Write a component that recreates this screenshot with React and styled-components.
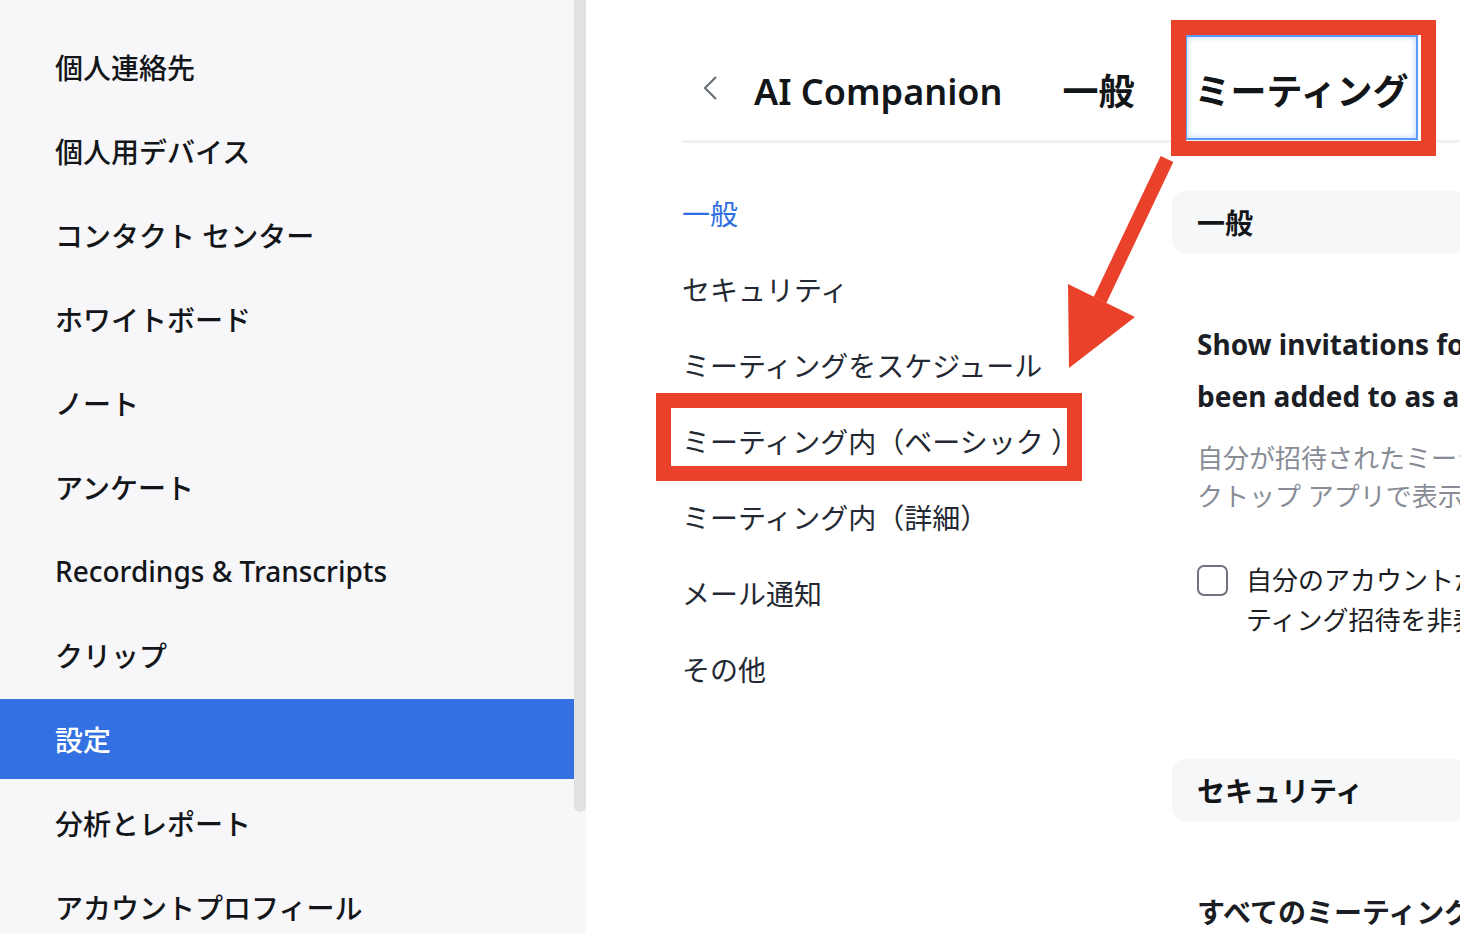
import React from "react";
import styled, { createGlobalStyle, css } from "styled-components";

const GlobalStyle = createGlobalStyle`
  html, body {
    margin: 0;
    padding: 0;
    background: #ffffff;
    overflow: hidden;
  }
  body {
    font-family: "Noto Sans", "Noto Sans CJK JP", sans-serif;
    color: #131619;
  }
`;

const sideItems = [
  "個人連絡先",
  "個人用デバイス",
  "コンタクト センター",
  "ホワイトボード",
  "ノート",
  "アンケート",
  "Recordings & Transcripts",
  "クリップ",
  "設定",
  "分析とレポート",
  "アカウントプロフィール",
];

const subItems = [
  "一般",
  "セキュリティ",
  "ミーティングをスケジュール",
  "ミーティング内（ベーシック ）",
  "ミーティング内（詳細）",
  "メール通知",
  "その他",
];

const RED = "#e9412a";

// Layout
const Page = styled.div`
  position: relative;
  display: flex;
  width: 1460px;
  height: 934px;
  overflow: hidden;
`;

const Sidebar = styled.aside`
  display: flex;
  flex-shrink: 0;
  width: 586px;
  height: 100%;
  background: #f7f7f9;
`;

const NavList = styled.nav`
  display: flex;
  flex-direction: column;
  gap: 4px;
  width: 574px;
  padding-top: 27px;
`;

const NavItem = styled.div`
  flex-shrink: 0;
  height: 80px;
  display: flex;
  align-items: center;
  padding-left: 55px;
  font-size: 28px;
  font-weight: 500;
  white-space: nowrap;
  color: #131619;
  ${({ $active }) =>
    $active &&
    css`
      background: #3371e3;
      color: #ffffff;
    `}
`;

const ScrollTrack = styled.div`
  width: 12px;
  height: 100%;
`;

const ScrollThumb = styled.div`
  height: 812px;
  background: #e1e1e3;
  border-radius: 0 0 6px 6px;
`;

const Main = styled.main`
  flex: 1;
  min-width: 0;
  overflow: hidden;
  padding-left: 96px;
`;

const TabBar = styled.div`
  display: flex;
  align-items: center;
  gap: 40px;
  padding-top: 35px;
  border-bottom: 3px solid #f0f1f4;
  width: 1200px;
`;

const BackButton = styled.div`
  display: flex;
  align-items: center;
  margin-left: 20px;
  margin-right: -16px;
  width: 18px;
  height: 105px;
  color: #6b7079;
`;

const Tab = styled.div`
  box-sizing: border-box;
  height: 105px;
  padding: 9px 10px 0;
  display: flex;
  align-items: center;
  font-size: 36px;
  font-weight: 600;
  line-height: 50px;
  white-space: nowrap;
  color: #131619;
  ${({ $focused }) =>
    $focused &&
    css`
      box-shadow: inset 0 0 0 2px #5b9bf4, inset 0 0 6px 2px #b9d4fb;
    `}
`;

const Body = styled.div`
  display: flex;
`;

const SubNav = styled.div`
  flex-shrink: 0;
  width: 490px;
  padding-top: 33px;
`;

const SubItem = styled.div`
  height: 76px;
  line-height: 76px;
  font-size: 28px;
  white-space: nowrap;
  color: ${({ $active }) => ($active ? "#2f6ee0" : "#232833")};
`;

const Content = styled.div`
  flex-shrink: 0;
  width: 900px;
  padding-top: 48px;
`;

const SectionHeader = styled.div`
  height: 62px;
  display: flex;
  align-items: center;
  padding-left: 25px;
  background: #f6f7f9;
  border-radius: 14px;
  font-size: 28px;
  font-weight: 700;
  color: #131619;
  margin-top: ${({ $gap }) => $gap || 0}px;
`;

const Setting = styled.div`
  padding: 65px 0 0 25px;
`;

const SettingTitle = styled.div`
  font-size: 28px;
  font-weight: 700;
  line-height: 52px;
  white-space: nowrap;
  color: #1b1e25;
`;

const SettingDesc = styled.div`
  margin-top: 17px;
  font-size: 26px;
  line-height: 38px;
  white-space: nowrap;
  color: #878c96;
`;

const CheckRow = styled.label`
  display: flex;
  align-items: flex-start;
  gap: 18px;
  margin-top: 45px;
`;

const CheckBox = styled.span`
  box-sizing: border-box;
  flex-shrink: 0;
  width: 31px;
  height: 31px;
  margin-top: 5px;
  border: 2px solid #6e7480;
  border-radius: 7px;
  background: #ffffff;
`;

const CheckText = styled.div`
  font-size: 26px;
  line-height: 40px;
  white-space: nowrap;
  color: #1b1e25;
`;

// Annotations drawn over the screenshot
const Highlight = styled.div`
  position: absolute;
  box-sizing: border-box;
  border: 15px solid ${RED};
  pointer-events: none;
`;

const ArrowLayer = styled.svg`
  position: absolute;
  left: 0;
  top: 0;
  pointer-events: none;
`;

const App = () => {
  return (
    <>
      <GlobalStyle />
      <Page>
        <Sidebar>
          <NavList>
            {sideItems.map((label) => (
              <NavItem key={label} $active={label === "設定"}>
                {label}
              </NavItem>
            ))}
          </NavList>
          <ScrollTrack>
            <ScrollThumb />
          </ScrollTrack>
        </Sidebar>

        <Main>
          <TabBar>
            <BackButton>
              <svg width="16" height="26" viewBox="0 0 16 26" fill="none">
                <path d="M14 2 L3 13 L14 24" stroke="currentColor" strokeWidth="2.2" />
              </svg>
            </BackButton>
            <Tab>AI Companion</Tab>
            <Tab>一般</Tab>
            <Tab $focused>ミーティング</Tab>
          </TabBar>

          <Body>
            <SubNav>
              {subItems.map((label, i) => (
                <SubItem key={label} $active={i === 0}>
                  {label}
                </SubItem>
              ))}
            </SubNav>

            <Content>
              <SectionHeader>一般</SectionHeader>
              <Setting>
                <SettingTitle>
                  Show invitations for meetings that you have
                  <br />
                  been added to as an alternative host
                </SettingTitle>
                <SettingDesc>
                  自分が招待されたミーティングの招待状をデス
                  <br />
                  クトップ アプリで表示します
                </SettingDesc>
                <CheckRow>
                  <CheckBox />
                  <CheckText>
                    自分のアカウントが代理ホストとして追加されたミー
                    <br />
                    ティング招待を非表示にする
                  </CheckText>
                </CheckRow>
              </Setting>

              <SectionHeader $gap={119}>セキュリティ</SectionHeader>
              <Setting>
                <SettingTitle>すべてのミーティングをパスコードで保護</SettingTitle>
              </Setting>
            </Content>
          </Body>
        </Main>

        <Highlight style={{ left: 1171, top: 20, width: 265, height: 136 }} />
        <Highlight style={{ left: 656, top: 393, width: 426, height: 88 }} />
        <ArrowLayer width="1460" height="934" viewBox="0 0 1460 934">
          <line x1="1167" y1="159" x2="1100" y2="300" stroke={RED} strokeWidth="14" />
          <polygon points="1068,284 1135,317 1069,368" fill={RED} />
        </ArrowLayer>
      </Page>
    </>
  );
};

export default App;
